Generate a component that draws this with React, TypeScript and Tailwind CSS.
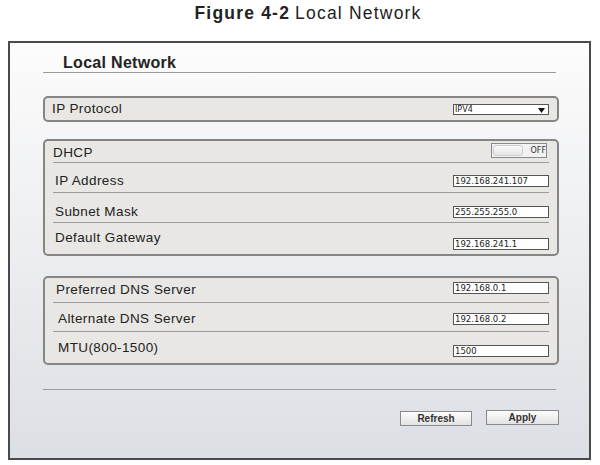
const font = { fontFamily: '"Liberation Sans", Arial, sans-serif' };

function Field({ value }: { value: string }) {
  return (
    <div className="flex h-[12px] w-[96px] items-center border-[1.5px] border-[#555] bg-white pl-[1px] text-[8.5px] leading-none text-[#222] [font-family:'DejaVu_Sans',sans-serif]">
      {value}
    </div>
  );
}

function Panel({ children, className = '' }: { children: React.ReactNode; className?: string }) {
  return (
    <div className={`rounded-[5px] border-2 border-[#858585] bg-[#e8e7e4] ${className}`}>{children}</div>
  );
}

function Row({
  label,
  labelTop,
  labelLeft = 0,
  fieldTop,
  height,
  last,
  children,
}: {
  label: string;
  labelTop: number;
  labelLeft?: number;
  fieldTop: number;
  height: string;
  last?: boolean;
  children: React.ReactNode;
}) {
  return (
    <div className={`flex justify-between ${height} ${last ? '' : 'border-b border-[#9a9a9a]'}`}>
      <span
        className="text-[13.5px] leading-[16px] tracking-[0.4px] text-[#222]"
        style={{ marginTop: labelTop, marginLeft: labelLeft }}
      >
        {label}
      </span>
      <div style={{ marginTop: fieldTop }}>{children}</div>
    </div>
  );
}

export default function App() {
  return (
    <div className="h-[465px] w-[600px] bg-white" style={font}>
      <div className="flex h-[41px] justify-center pl-[16px] pt-[3px] text-[17.5px] leading-[20px] tracking-[1.2px] text-[#222]">
        <span className="font-bold">Figure 4-2</span>
        <span className="ml-[5px]">Local Network</span>
      </div>

      <div className="ml-[8px] h-[419px] w-[583px] border-2 border-[#4a4a4a] bg-gradient-to-b from-[#fcfcfc] to-[#dcdfe4] pl-[33px] pr-[30px]">
        <div className="mr-[3px] border-b border-[#9a9a9a] pt-[10px]">
          <div className="pl-[20px] text-[16px] font-bold leading-[19px] tracking-[0.3px] text-[#222]">Local Network</div>
        </div>

        <Panel className="mt-[23px] h-[26px] pl-[7px] pr-2">
          <div className="flex justify-between">
            <span className="mt-[3px] text-[13.5px] leading-[16px] tracking-[0.4px] text-[#222]">IP Protocol</span>
            <div className="relative mt-[6px] flex h-[11px] w-[96px] items-center border border-[#555] bg-white pl-[1px] text-[8px] leading-none text-[#222] [font-family:'DejaVu_Sans',sans-serif]">
              IPV4
              <svg className="absolute right-[3px] top-[3px]" width="7" height="5" viewBox="0 0 7 5">
                <path d="M0 0H7L3.5 5Z" fill="#111" />
              </svg>
            </div>
          </div>
        </Panel>

        <Panel className="mt-[17px] h-[117px] px-2">
          <Row label="DHCP" labelTop={4} fieldTop={2} height="h-[22px]">
            <div className="mr-[2px] flex h-[15px] w-[56px] items-center border border-[#8a8a8a] bg-[#f1f1f1] pl-[1px]">
              <div className="h-[11px] w-[30px] rounded-[3px] border border-[#cfcfcf] bg-gradient-to-b from-[#fafafa] to-[#e6e6e6]" />
              <span className="ml-[8px] text-[8px] leading-none text-[#333] [font-family:'DejaVu_Sans',sans-serif]">OFF</span>
            </div>
          </Row>
          <Row label="IP Address" labelLeft={2} labelTop={10} fieldTop={12} height="h-[30px]">
            <Field value="192.168.241.107" />
          </Row>
          <Row label="Subnet Mask" labelLeft={2} labelTop={11} fieldTop={13} height="h-[30px]">
            <Field value="255.255.255.0" />
          </Row>
          <Row label="Default Gateway" labelLeft={2} labelTop={7} fieldTop={15} height="h-[31px]" last>
            <Field value="192.168.241.1" />
          </Row>
        </Panel>

        <Panel className="mt-[20px] h-[89px] px-2">
          <Row label="Preferred DNS Server" labelLeft={3} labelTop={4} fieldTop={4} height="h-[25px]">
            <Field value="192.168.0.1" />
          </Row>
          <Row label="Alternate DNS Server" labelLeft={5} labelTop={8} fieldTop={10} height="h-[29px]">
            <Field value="192.168.0.2" />
          </Row>
          <Row label="MTU(800-1500)" labelLeft={5} labelTop={8} fieldTop={13} height="h-[31px]" last>
            <Field value="1500" />
          </Row>
        </Panel>

        <div className="mr-[3px] mt-[24px] border-t border-[#9a9a9a]" />

        <div className="mt-[21px] flex justify-end gap-[14px]">
          <button className="h-[15px] w-[72px] border-[1.5px] border-[#8a8a8a] bg-gradient-to-b from-[#fdfdfd] to-[#e2e2e2] text-[10px] font-bold leading-none text-[#333]">
            Refresh
          </button>
          <button className="-mt-[1px] h-[15px] w-[73px] border-[1.5px] border-[#8a8a8a] bg-gradient-to-b from-[#fdfdfd] to-[#e2e2e2] text-[10px] font-bold leading-none text-[#333]">
            Apply
          </button>
        </div>
      </div>
    </div>
  );
}
